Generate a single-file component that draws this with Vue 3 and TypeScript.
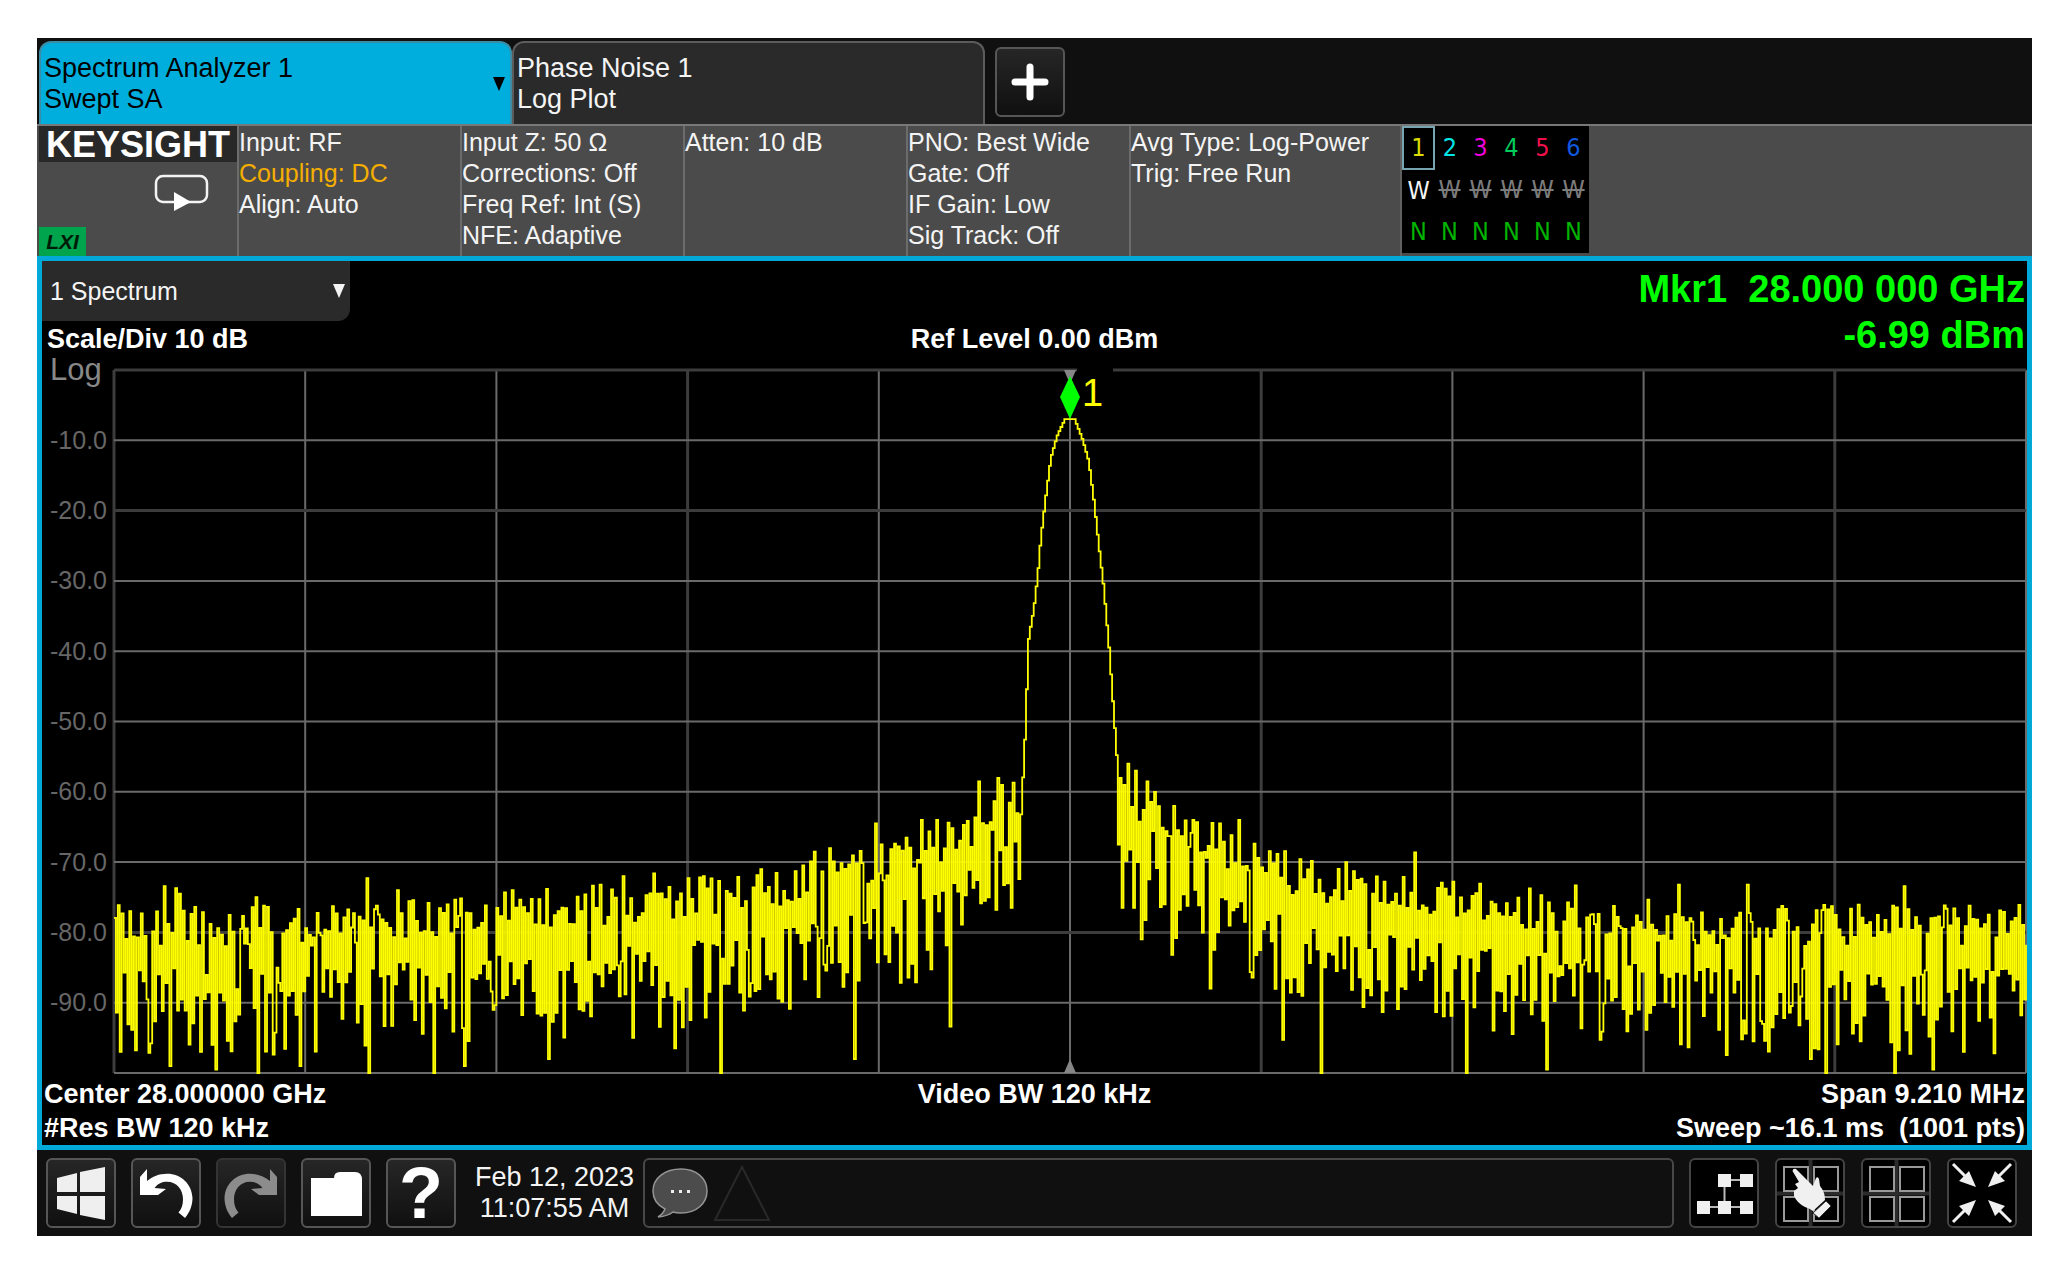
<script setup lang="ts">
import { ref } from 'vue'

interface Setting {
  text: string
  warn?: boolean
}

const settings: Setting[][] = [
  [{ text: 'Input: RF' }, { text: 'Coupling: DC', warn: true }, { text: 'Align: Auto' }],
  [
    { text: 'Input Z: 50 Ω' },
    { text: 'Corrections: Off' },
    { text: 'Freq Ref: Int (S)' },
    { text: 'NFE: Adaptive' },
  ],
  [{ text: 'Atten: 10 dB' }],
  [
    { text: 'PNO: Best Wide' },
    { text: 'Gate: Off' },
    { text: 'IF Gain: Low' },
    { text: 'Sig Track: Off' },
  ],
  [{ text: 'Avg Type: Log-Power' }, { text: 'Trig: Free Run' }],
]

const traceNumbers = [1, 2, 3, 4, 5, 6]
const view = ref('1 Spectrum')
const axisLabels = Array.from({ length: 9 }, (_, i) => `-${(i + 1) * 10}.0`)

// Plot space: 1912 x 702 units, 0 to -100 dB
const plotWidth = 1912
const plotHeight = 702
const columns = Array.from({ length: 11 }, (_, i) => ({
  x: (i * plotWidth) / 10,
  dim: i === 3 || i === 6 || i === 9 || i === 0,
}))
const rows = Array.from({ length: 11 }, (_, i) => ({
  y: (i * plotHeight) / 10,
  dim: i === 0 || i === 2 || i === 8,
}))

// Mean noise level, as x and dB
const noiseFloor: [number, number][] = [
  [0, -83.5],
  [200, -83.5],
  [400, -81.5],
  [560, -80],
  [690, -77.5],
  [766, -74.5],
  [830, -72],
  [880, -67],
  [908, -65],
  [1004, -64],
  [1030, -68],
  [1080, -71],
  [1140, -74],
  [1200, -77.5],
  [1320, -79.5],
  [1460, -82],
  [1600, -83.5],
  [1912, -83.5],
]

// Skirt and crest of the carrier, as x and dB
const carrier: [number, number][] = [
  [906, -64],
  [910, -53],
  [914, -38],
  [919, -34],
  [923, -29],
  [926, -24],
  [931, -18],
  [936, -12.5],
  [942, -9.5],
  [950, -7],
  [960, -7],
  [968, -10],
  [974, -13],
  [979, -18.5],
  [984, -25],
  [989, -31],
  [994, -39],
  [998, -47],
  [1003, -57],
]

// Outstanding single readings, as x and dB
const extremes: [number, number][] = [
  [5, -97], [49, -73.4], [60, -73.7], [65, -74.5], [56, -99], [101, -99.5], [141, -75],
  [143, -100], [185, -99], [252, -72.3], [254, -100], [283, -74], [319, -100], [350, -99],
  [397, -74], [433, -98], [487, -73.2], [508, -72], [520, -95], [538, -71.6], [562, -96.5],
  [573, -72.3], [584, -72.2], [605, -100], [589, -72], [646, -71], [699, -68.5], [714, -68],
  [740, -98], [760, -64.5], [806, -64], [821, -64], [835, -93.4], [864, -58.5], [884, -58],
  [889, -59], [1006, -58], [1012, -56], [1020, -57], [1033, -58.5], [1042, -60], [1059, -62],
  [1026, -81], [1079, -64], [1104, -64.5], [1124, -64], [1094, -88], [1168, -95.3],
  [1205, -100], [1230, -70], [1299, -68.6], [1350, -100], [1431, -99.5], [1460, -73.3],
  [1564, -73.2], [1632, -73.2], [1697, -98], [1710, -100], [1779, -100], [1788, -73.4],
  [1818, -99.5], [1850, -97],
]

function interpolate(points: [number, number][], x: number): number {
  for (let i = 1; i < points.length; i++) {
    const [x0, y0] = points[i - 1]
    const [x1, y1] = points[i]
    if (x <= x1) return y0 + ((y1 - y0) * (x - x0)) / (x1 - x0)
  }
  return points[points.length - 1][1]
}

// The normal detector alternates between the highest and lowest reading of each bucket
function buildTrace(): string {
  const count = 1001
  const step = plotWidth / (count - 1)
  let seed = 20230212
  const random = () => {
    seed = (Math.imul(seed, 1664525) + 1013904223) >>> 0
    return (seed + 1) / 4294967297
  }
  const fixed = new Map<number, number>()
  for (const [x, level] of extremes) {
    const parity = level > interpolate(noiseFloor, x) ? 0 : 1
    fixed.set(Math.round((x / step - parity) / 2) * 2 + parity, level)
  }

  let path = ''
  for (let i = 0; i < count; i++) {
    const x = i * step
    const floor = interpolate(noiseFloor, x)
    const high = i % 2 === (random() < 0.05 ? 1 : 0)
    const r = random()
    const swing = high ? 1.5 + 6 * r : -1.5 - 12.5 * Math.pow(r, 1.3)
    let level = floor + swing
    if (x > 906 && x < 1003) level = interpolate(carrier, x)
    const special = fixed.get(i)
    if (special !== undefined) level = special
    const y = Math.min(plotHeight, Math.max(0, (-level * plotHeight) / 100))
    path += i === 0 ? `M0 ${y.toFixed(1)}` : `H${x.toFixed(1)}V${y.toFixed(1)}`
  }
  return path
}

const trace = buildTrace()
</script>

<template>
  <main class="page">
    <div class="analyzer">
      <nav class="tabs">
        <button class="tab tab-active" type="button">
          <span>Spectrum Analyzer 1<br />Swept SA</span>
          <svg class="caret" viewBox="0 0 12 14" aria-hidden="true"><path d="M0 0H12L6 14Z" /></svg>
        </button>
        <button class="tab" type="button"><span>Phase Noise 1<br />Log Plot</span></button>
        <button class="tool add" type="button" aria-label="Add screen">
          <svg viewBox="2 2 66 66"><path d="M20 35H50M35 20V50" stroke="#fff" stroke-width="7" stroke-linecap="round" /></svg>
        </button>
      </nav>

      <header class="status">
        <section class="brand">
          <strong class="brand-name">KEYSIGHT</strong>
          <svg class="sweep" viewBox="0 0 56 38" aria-label="Continuous sweep">
            <rect x="2" y="2" width="51" height="26" rx="7" fill="none" stroke="#f4f4f4" stroke-width="2.5" />
            <path d="M20 18V37L37 28Z" fill="#fff" />
          </svg>
          <span class="lxi">LXI</span>
        </section>
        <section v-for="(group, g) in settings" :key="g" class="group">
          <div v-for="line in group" :key="line.text" :class="{ warn: line.warn }">{{ line.text }}</div>
        </section>
        <section class="traces">
          <table>
            <tbody>
              <tr>
                <td v-for="n in traceNumbers" :key="n" :class="['number', `trace-${n}`]">{{ n }}</td>
              </tr>
              <tr>
                <td v-for="n in traceNumbers" :key="n" :class="n === 1 ? 'mode' : 'mode mode-off'">W</td>
              </tr>
              <tr>
                <td v-for="n in traceNumbers" :key="n" class="detector">N</td>
              </tr>
            </tbody>
          </table>
        </section>
      </header>

      <section class="window">
        <div class="readouts">
          <div class="left">
            <label class="view">
              <select v-model="view" aria-label="View">
                <option>1 Spectrum</option>
              </select>
              <svg class="caret" viewBox="0 0 12 14" aria-hidden="true"><path d="M0 0H12L6 14Z" /></svg>
            </label>
            <div class="scale">Scale/Div 10 dB</div>
          </div>
          <div class="reference">Ref Level 0.00 dBm</div>
          <div class="marker-readout">Mkr1&nbsp; 28.000 000 GHz<br />-6.99 dBm</div>
        </div>

        <div class="chart">
          <div class="axis">
            <span class="log">Log</span>
            <span v-for="label in axisLabels" :key="label">{{ label }}</span>
          </div>
          <div class="plot">
            <svg class="graph" :viewBox="`0 0 ${plotWidth} ${plotHeight}`" preserveAspectRatio="none">
              <line v-for="c in columns" :key="`c${c.x}`" :x1="c.x" :x2="c.x" y1="0" :y2="plotHeight" :class="c.dim ? 'dim' : 'bright'" />
              <line v-for="r in rows" :key="`r${r.y}`" :y1="r.y" :y2="r.y" x1="0" :x2="plotWidth" :class="r.dim ? 'dim' : 'bright'" />
              <rect x="963" y="-3" width="36" height="8" fill="#000" />
              <path d="M950 0H962L956 14ZM950 702H962L956 688Z" fill="#858585" />
              <path :d="trace" fill="none" stroke="#ff0" stroke-width="1.8" />
              <path d="M956 6L966 27L956 49L946 27Z" fill="#0f0" />
            </svg>
            <span class="marker-number">1</span>
          </div>
        </div>

        <footer class="sweep-info">
          <div>Center 28.000000 GHz<br />#Res BW 120 kHz</div>
          <div>Video BW 120 kHz</div>
          <div class="right">Span 9.210 MHz<br />Sweep ~16.1 ms&nbsp; (1001 pts)</div>
        </footer>
      </section>

      <footer class="toolbar">
        <div class="tools">
          <button class="tool" type="button" aria-label="Windows">
            <svg viewBox="2 2 66 66"><path d="M11 20L31 15V34H11ZM34 14L59 9V34H34ZM11 38H31V56L11 51ZM34 38H59V62L34 57Z" fill="#efefef" /></svg>
          </button>
          <button class="tool" type="button" aria-label="Undo">
            <svg viewBox="2 2 66 66"><path d="M9 19V37H27L35 31L23.5 30C27 25.5 31 23.8 36 23.8C46 23.8 52 32 52 41C52 47 50.5 51 47.5 54.5L54 60C59 54 61.5 47 61.5 40C61 26 50 15.7 36 15.7C28 15.7 21.5 18.5 16 23V11Z" fill="#fff" /></svg>
          </button>
          <button class="tool tool-disabled" type="button" aria-label="Redo" disabled>
            <svg viewBox="2 2 66 66"><path transform="matrix(-1 0 0 1 70 0)" d="M9 19V37H27L35 31L23.5 30C27 25.5 31 23.8 36 23.8C46 23.8 52 32 52 41C52 47 50.5 51 47.5 54.5L54 60C59 54 61.5 47 61.5 40C61 26 50 15.7 36 15.7C28 15.7 21.5 18.5 16 23V11Z" fill="#8c8c8c" /></svg>
          </button>
          <button class="tool" type="button" aria-label="Files">
            <svg viewBox="2 2 66 66"><path d="M10 20H33Q33 14 39 14H54Q61 14 61 22V58H10Z" fill="#fff" /></svg>
          </button>
          <button class="tool help" type="button" aria-label="Help">?</button>
        </div>
        <time class="clock" datetime="2023-02-12T11:07:55">Feb 12, 2023<br />11:07:55 AM</time>
        <div class="messages">
          <svg viewBox="0 0 140 66" aria-label="Messages">
            <path d="M20 49Q18 54 13 57Q23 56 28 52C31 53 33 53 36 53C52 53 62 43 62 31C62 18 51 9 36 9C20 9 8 18 8 31C8 39 12 45 20 49Z" fill="#4c4c4c" stroke="#959595" stroke-width="1.5" />
            <path d="M26 30H29V33H26ZM34 30H37V33H34ZM42 30H45V33H42Z" fill="#eee" />
            <path d="M97 7L124 60H70Z" fill="none" stroke="#292929" stroke-width="2" />
          </svg>
        </div>
        <div class="tools tools-layout">
          <button class="tool flat" type="button" aria-label="Block diagram">
            <svg viewBox="2 2 66 66">
              <path d="M35.5 22H57M35.5 22V49M14 49H57" fill="none" stroke="#b8b8b8" stroke-width="2" />
              <path d="M29 16H42V29H29ZM51 16H64V29H51ZM8 43H21V56H8ZM29 43H42V56H29ZM51 43H64V56H51Z" fill="#f0f0f0" />
            </svg>
          </button>
          <button class="tool flat" type="button" aria-label="Select window">
            <svg viewBox="2 2 66 66">
              <path d="M2 35.5H68M35.5 2V68" stroke="#2b2b2b" stroke-width="4" />
              <path d="M9 9H33V33H9ZM39 9H63V33H39ZM9 39H33V63H9ZM39 39H63V63H39Z" fill="none" stroke="#999" stroke-width="2" />
              <path d="M17.5 13Q18 10 21 11L38 28L41 20Q43 18 44 21L45 28Q50 34 50 42L38 53Q34 50 30 49Q22 45 19 38V33L23 30L20 26L24 24Z" fill="#f0f0f0" />
              <path d="M38 55L51 43L56 48L44 60Z" fill="#f0f0f0" stroke="#333" stroke-width="1" />
            </svg>
          </button>
          <button class="tool flat" type="button" aria-label="Window grid">
            <svg viewBox="2 2 66 66">
              <path d="M2 35.5H68M35.5 2V68" stroke="#2b2b2b" stroke-width="4" />
              <path d="M9 9H33V33H9ZM39 9H63V33H39ZM9 39H33V63H9ZM39 39H63V63H39Z" fill="none" stroke="#999" stroke-width="2" />
            </svg>
          </button>
          <button class="tool flat" type="button" aria-label="Exit full screen">
            <svg viewBox="2 2 66 66">
              <path d="M6 6L20 20M64 6L50 20M6 64L20 50M64 64L50 50" stroke="#f0f0f0" stroke-width="3" />
              <path d="M29 29L22 13L12 23ZM41 29L48 13L58 23ZM29 42L22 58L12 48ZM41 42L48 58L58 48Z" fill="#f0f0f0" />
            </svg>
          </button>
        </div>
      </footer>
    </div>
  </main>
</template>

<style>
body {
  margin: 0;
  background: #fff;
}
</style>

<style scoped>
.page {
  box-sizing: border-box;
  display: flex;
  min-height: 100vh;
  padding: 38px 33px 33px 37px;
  font-family: 'Liberation Sans', Arial, sans-serif;
  font-size: 25px;
  color: #f4f4f4;
}

button,
select {
  margin: 0;
  font: inherit;
  color: inherit;
}

.analyzer {
  flex: 1;
  min-width: 0;
  display: flex;
  flex-direction: column;
  background: #101010;
}

.caret {
  width: 12px;
  height: 14px;
  fill: currentColor;
}

/* Screen tabs */
.tabs {
  display: flex;
  align-items: flex-end;
  height: 86px;
  padding-left: 2px;
  border-bottom: 2px solid #787878;
}

.tab {
  box-sizing: border-box;
  display: flex;
  align-items: center;
  justify-content: space-between;
  width: 473px;
  height: 83px;
  padding: 0 5px 0 3px;
  border: 2px solid #5c5c5c;
  border-bottom: 0;
  border-radius: 12px 12px 0 0;
  background: #2a2a2a;
  font-size: 27px;
  line-height: 31px;
  text-align: left;
}

.tab-active {
  border-color: #3c8ca6;
  background: #00aede;
  color: #000;
}

.tool {
  box-sizing: border-box;
  flex: none;
  display: flex;
  align-items: center;
  justify-content: center;
  width: 70px;
  height: 70px;
  padding: 0;
  border: 2px solid #565656;
  border-radius: 6px;
  background: linear-gradient(#262626, #101010);
}

.tool svg {
  width: 66px;
  height: 66px;
}

.add {
  margin: 0 0 7px 10px;
}

.tool-disabled {
  border-color: #343434;
}

.flat {
  border-color: #444;
  background: #000;
}

.help {
  font-size: 72px;
  font-weight: bold;
  line-height: 66px;
  color: #fff;
}

/* Measurement settings */
.status {
  display: grid;
  grid-template-columns: 198px repeat(4, 223px) 271px 1fr;
  height: 130px;
  padding-left: 2px;
  background: #4b4b4b;
  line-height: 31px;
}

.brand {
  display: flex;
  flex-direction: column;
}

.brand-name {
  height: 36px;
  padding-left: 7px;
  background: #282828;
  color: #fff;
  font-size: 36px;
  line-height: 38px;
}

.sweep {
  width: 56px;
  height: 38px;
  margin: 12px 27px 0 auto;
}

.lxi {
  width: 47px;
  margin-top: auto;
  background: #00a44c;
  color: #001c08;
  font-size: 21px;
  font-style: italic;
  font-weight: bold;
  line-height: 29px;
  text-align: center;
}

.group {
  padding-top: 1px;
  border-left: 2px solid #6c6c6c;
  white-space: nowrap;
}

.warn {
  color: #f5ae00;
}

.traces {
  border-left: 2px solid #606060;
}

table {
  border-collapse: collapse;
  background: #000;
  font-family: 'DejaVu Sans Condensed', 'DejaVu Sans', sans-serif;
  font-size: 25px;
}

td {
  box-sizing: border-box;
  width: 31px;
  height: 42px;
  padding: 0;
  line-height: 38px;
  text-align: center;
}

.trace-1 {
  border: 2px solid #76a4b0;
  color: #dcdc00;
}

.trace-2 {
  color: #00e6e6;
}

.trace-3 {
  color: #f000dc;
}

.trace-4 {
  color: #00cc5c;
}

.trace-5 {
  color: #f0104c;
}

.trace-6 {
  color: #1058e0;
}

.mode-off {
  color: #7c7c7c;
  text-decoration: line-through;
}

.detector {
  color: #00b400;
}

/* Spectrum window */
.window {
  flex: 1;
  display: flex;
  flex-direction: column;
  border: 5px solid #00a9d8;
  background: #000;
}

.readouts {
  display: grid;
  grid-template-columns: 1fr auto 1fr;
  height: 109px;
}

.view {
  position: relative;
  display: block;
  width: 308px;
  height: 60px;
}

.view select {
  box-sizing: border-box;
  width: 100%;
  height: 100%;
  padding: 0 40px 0 8px;
  appearance: none;
  border: 0;
  border-radius: 0 0 12px 0;
  background: #2a2a2a;
  font-size: 25px;
}

.view .caret {
  position: absolute;
  top: 23px;
  right: 5px;
  pointer-events: none;
}

.scale,
.reference,
.sweep-info {
  color: #fff;
  font-size: 27px;
  font-weight: bold;
  line-height: 31px;
}

.scale {
  padding: 3px 0 0 5px;
}

.reference {
  padding-top: 63px;
}

.marker-readout {
  padding: 5px 2px 0 0;
  color: #0f0;
  font-size: 38px;
  font-weight: bold;
  line-height: 46px;
  text-align: right;
}

.chart {
  flex: 1;
  display: flex;
  min-height: 400px;
  padding-right: 1px;
}

.axis {
  display: grid;
  grid-template-rows: minmax(0, 1fr) repeat(9, minmax(0, 2fr)) minmax(0, 1fr);
  align-items: center;
  width: 72px;
  padding-left: 8px;
  box-sizing: border-box;
  color: #666;
}

.log {
  align-self: start;
  color: #888;
  font-size: 31px;
  line-height: 0;
}

.plot {
  position: relative;
  flex: 1;
  display: flex;
  min-width: 0;
}

.graph {
  flex: 1;
  min-width: 0;
  overflow: visible;
}

.bright {
  stroke: #6a6a6a;
  stroke-width: 2;
}

.dim {
  stroke: #3c3c3c;
  stroke-width: 3;
}

.marker-number {
  position: absolute;
  top: 2px;
  left: 50%;
  padding-left: 12px;
  color: #ff0;
  font-size: 38px;
  line-height: 42px;
}

.sweep-info {
  display: grid;
  grid-template-columns: 1fr auto 1fr;
  padding: 4px 2px 0 2px;
  line-height: 34px;
}

.right {
  text-align: right;
}

/* System bar */
.toolbar {
  display: flex;
  align-items: center;
  height: 86px;
  padding: 0 15px 0 9px;
}

.tools {
  display: flex;
  gap: 15px;
}

.tools-layout {
  gap: 16px;
}

.clock {
  box-sizing: border-box;
  width: 187px;
  padding-left: 10px;
  font-size: 27px;
  line-height: 31px;
  text-align: center;
}

.messages {
  box-sizing: border-box;
  flex: 1;
  height: 70px;
  margin-right: 15px;
  border: 2px solid #484848;
  border-radius: 6px;
}

.messages svg {
  display: block;
  width: 140px;
  height: 66px;
}
</style>
